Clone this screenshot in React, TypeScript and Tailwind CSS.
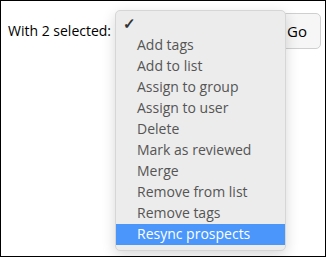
const ITEMS = [
  'Add tags',
  'Add to list',
  'Assign to group',
  'Assign to user',
  'Delete',
  'Mark as reviewed',
  'Merge',
  'Remove from list',
  'Remove tags',
  'Resync prospects',
];

export default function App() {
  return (
    <div className="w-[326px] h-[257px] border border-black bg-white relative overflow-hidden" style={{ fontFamily: '"Open Sans", sans-serif' }}>
      {/* 액션 선택 줄 */}
      <div className="flex items-center pl-[7px] pt-[12px] pr-[4px]">
        <span className="text-[14px] text-black leading-[36px]">With 2 selected:</span>
        <div className="ml-auto w-[60px] h-[36px] rounded-[5px] border border-[#cfcfcf] bg-[#f6f6f6] flex items-center justify-end pr-[13px] text-[15px] text-black">
          Go
        </div>
      </div>

      {/* 드롭다운 메뉴 */}
      <div className="absolute left-[114px] top-[9px] w-[171px] h-[241px] rounded-[5px] bg-[#ececec] border border-[#d6d6d6] shadow-[0_4px_14px_rgba(0,0,0,0.16)] pt-[3px]">
        <div className="h-[21px] pl-[7px] text-[15px] font-semibold text-[#333] leading-[19px]">✓</div>
        {ITEMS.map((item, i) => (
          <div
            key={item}
            className={
              i === ITEMS.length - 1
                ? 'h-[21px] pl-[21px] text-[14px] leading-[20px] bg-[#4a96fa] text-white'
                : 'h-[21px] pl-[21px] text-[14px] leading-[20px] text-[#555]'
            }
          >
            {item}
          </div>
        ))}
      </div>
    </div>
  );
}
